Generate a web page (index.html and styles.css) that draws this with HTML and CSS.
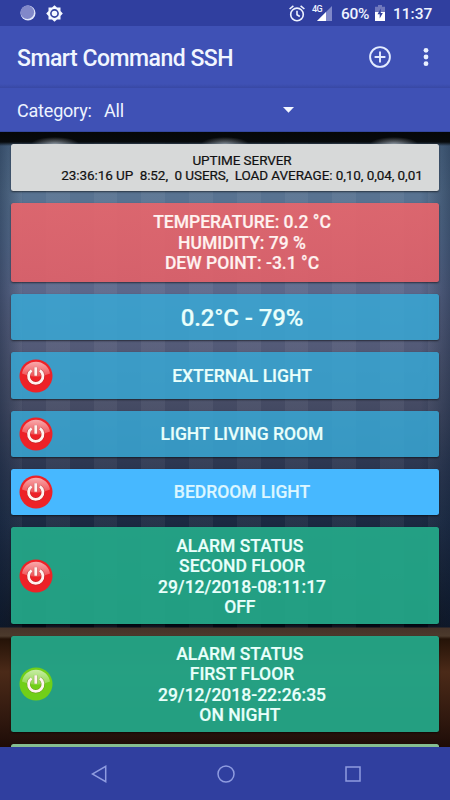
FILE: index.html
```html
<!DOCTYPE html>
<html lang="en">
<head>
    <meta charset="UTF-8">
    <meta name="viewport" content="width=device-width, initial-scale=1.0">
    <title>Smart Command SSH</title>
    <link rel="stylesheet" href="styles.css">
</head>
<body>
    <!-- shared power button drawing -->
    <svg class="defs" width="0" height="0">
        <defs>
            <linearGradient id="shine" x1="0" y1="0" x2="0" y2="1">
                <stop offset="0" stop-color="#fff" stop-opacity=".62"/>
                <stop offset="1" stop-color="#fff" stop-opacity=".2"/>
            </linearGradient>
            <symbol id="power" viewBox="0 0 34 34">
                <circle cx="17" cy="17" r="16.5" fill="currentColor"/>
                <path d="M3 14.500A14.200 14.200 0 0 1 31 14.500Q17 21 3 14.500z" fill="url(#shine)"/>
                <path d="M12.600 11.300a7.200 7.200 0 1 0 8.300 0M16.750 8.200v8.600" fill="none" stroke="#400" stroke-opacity=".25" stroke-width="3.800"/>
                <path d="M12.600 11.300a7.200 7.200 0 1 0 8.300 0M16.750 8.200v8.600" fill="none" stroke="#fff4f0" stroke-width="2.800"/>
            </symbol>
        </defs>
    </svg>

    <div class="screen">
        <div class="status-bar">
            <svg class="dot" width="16" height="16" viewBox="0 0 16 16">
                <circle cx="8" cy="8" r="7.500" fill="#e0e6fb"/>
                <circle cx="7.300" cy="7.300" r="6.800" fill="#8188c9"/>
            </svg>
            <svg class="gear" width="17" height="17" viewBox="0 0 17 17">
                <path d="M8.500 .2L11 2.500h3.500V6l2.300 2.500-2.300 2.500v3.500H11l-2.500 2.300L6 14.500H2.500V11L.2 8.500 2.500 6V2.500H6z" fill="#f4f8ff"/>
                <circle cx="8.500" cy="8.500" r="3.600" fill="#f4f8ff" stroke="#303f9f" stroke-width="1.600"/>
            </svg>
            <svg class="alarm" width="16" height="17" viewBox="0 0 16 17" fill="none" stroke="#eef3ff" stroke-width="1.600">
                <circle cx="8" cy="9.400" r="6.300"/>
                <path d="M8 5.800v4l2.800 1.700M.6 4L4.400.9M15.400 4L11.600.9"/>
            </svg>
            <span class="network">4G</span>
            <svg class="signal" width="15" height="15" viewBox="0 0 15 15">
                <path d="M0 15L15 0v15z" fill="#7f88c9"/>
                <path d="M0 15L9 6v9z" fill="#fff"/>
            </svg>
            <span class="percent">60%</span>
            <svg class="battery" width="10" height="16" viewBox="0 0 10 16">
                <path d="M3 0h4v1.800h3V16H0V1.800h3z" fill="#7179bd"/>
                <path d="M0 7h10v9H0z" fill="#fff"/>
                <path d="M5.800 3.500L2.500 9.300h2.200V13.500L7.800 8H5.800z" fill="#303f9f"/>
            </svg>
            <span class="clock">11:37</span>
        </div>

        <div class="toolbar">
            <h1>Smart Command SSH</h1>
            <svg class="add" width="22" height="22" viewBox="0 0 22 22" fill="none" stroke="#e3ecff" stroke-width="1.900">
                <circle cx="11" cy="11" r="9.900"/>
                <path d="M11 5.600v10.800M5.600 11h10.800"/>
            </svg>
            <svg class="more" width="6" height="20" viewBox="0 0 6 20" fill="#e9f0ff">
                <circle cx="3" cy="3.300" r="2.400"/>
                <circle cx="3" cy="10" r="2.400"/>
                <circle cx="3" cy="16.700" r="2.400"/>
            </svg>
        </div>

        <div class="category">
            <span class="label">Category:</span>
            <span class="value">All</span>
            <svg width="11" height="6" viewBox="0 0 11 6"><path d="M0 0h11L5.500 5.800z" fill="#f4f8ff"/></svg>
        </div>

        <div class="commands">
            <div class="card uptime"><p>UPTIME SERVER
23:36:16 UP  8:52,  0 USERS,  LOAD AVERAGE: 0,10, 0,04, 0,01</p></div>
            <div class="card red"><p>TEMPERATURE: 0.2 °C
HUMIDITY: 79 %
DEW POINT: -3.1 °C</p></div>
            <div class="card blue big"><p>0.2°C - 79%</p></div>
            <div class="card blue">
                <svg class="power off"><use href="#power"/></svg>
                <p>EXTERNAL LIGHT</p>
            </div>
            <div class="card blue">
                <svg class="power off"><use href="#power"/></svg>
                <p>LIGHT LIVING ROOM</p>
            </div>
            <div class="card bright">
                <svg class="power off"><use href="#power"/></svg>
                <p>BEDROOM LIGHT</p>
            </div>
            <div class="card green">
                <svg class="power off"><use href="#power"/></svg>
                <p>ALARM STATUS&nbsp;
SECOND FLOOR
29/12/2018-08:11:17
OFF&nbsp;</p>
            </div>
            <div class="card green">
                <svg class="power on"><use href="#power"/></svg>
                <p>ALARM STATUS&nbsp;
FIRST FLOOR
29/12/2018-22:26:35
ON NIGHT&nbsp;</p>
            </div>
            <div class="card pale"></div>
        </div>

        <div class="nav-bar">
            <svg width="16" height="18" viewBox="0 0 16 18"><path d="M14.700 1.300v15.400L1.300 9z"/></svg>
            <svg width="18" height="18" viewBox="0 0 18 18"><circle cx="9" cy="9" r="8"/></svg>
            <svg width="16" height="16" viewBox="0 0 16 16"><path d="M1 1h14v14H1z"/></svg>
        </div>
    </div>
</body>
</html>
```

FILE: styles.css
```css
* {
    box-sizing: border-box;
}
body {
    margin: 0;
    font-family: Roboto, sans-serif;
    color: #fff;
    background: #303f9f;
}
h1, p {
    margin: 0;
}
svg {
    display: block;
    flex-shrink: 0;
}
.defs {
    position: absolute;
}
.screen {
    width: 450px;
    height: 800px;
    display: flex;
    flex-direction: column;
    overflow: hidden;
}
.status-bar {
    height: 26px;
    flex-shrink: 0;
    display: flex;
    align-items: center;
    padding: 0 18px 0 20px;
    background: #303f9f;
    color: #eef3ff;
    font-size: 15.5px;
    font-weight: 500;
    white-space: nowrap;
}
.gear {
    margin-left: 10px;
}
.alarm {
    margin-left: auto;
}
.network {
    width: 10px;
    margin-left: 7px;
    align-self: flex-start;
    padding-top: 5px;
    font-size: 9px;
    line-height: 9px;
    letter-spacing: -0.5px;
}
.signal {
    margin: 1px 0 0 -5px;
}
.percent {
    width: 29px;
    margin-left: 9px;
    padding-top: 2px;
    letter-spacing: -0.3px;
}
.battery {
    margin-left: 5px;
}
.clock {
    width: 39px;
    margin-left: 8px;
    padding-top: 2px;
}
.toolbar {
    height: 62px;
    flex-shrink: 0;
    display: flex;
    align-items: center;
    padding: 0 21px 0 17px;
    background: linear-gradient(#3f51b5 58px, #3848a4);
}
.toolbar h1 {
    font-size: 23px;
    font-weight: 500;
    line-height: 28px;
    letter-spacing: -0.500px;
    padding-top: 3px;
    color: #f1f6ff;
    white-space: nowrap;
}
.add {
    margin-left: auto;
}
.more {
    margin-left: 32px;
}
.category {
    height: 44px;
    flex-shrink: 0;
    display: flex;
    align-items: center;
    padding: 1px 17px 0;
    background: #3f51b5;
    border-bottom: 1px solid #34479f;
    font-size: 18px;
    letter-spacing: -0.200px;
    color: #edf4ff;
}
.category .label {
    width: 87px;
}
.category .value {
    width: 179px;
}
.commands {
    flex: 1;
    min-height: 0;
    overflow: hidden;
    display: flex;
    flex-direction: column;
    gap: 12px;
    padding: 12.400px 11px 0;
    background:
        radial-gradient(ellipse 24px 7px at 55px 12px, rgba(190, 200, 210, .65), transparent),
        radial-gradient(ellipse 24px 7px at 225px 12px, rgba(190, 200, 210, .6), transparent),
        radial-gradient(ellipse 24px 7px at 394px 12px, rgba(190, 200, 210, .65), transparent),
        linear-gradient(#050708 0, #070a0c 10px, transparent 14px),
        linear-gradient(transparent 495px, #453329 496px, #4c3a2c 504px, #251308 507px, #4b2a18 540px, #2e170e 590px, #1d0b07 616px),
        linear-gradient(90deg, rgba(8, 25, 50, .42), transparent 24px, transparent 420px, rgba(8, 25, 50, .42)),
        repeating-linear-gradient(90deg, rgba(255, 255, 255, .05) 0 22px, transparent 22px 46px, rgba(255, 255, 255, .05) 46px 47.700px),
        linear-gradient(#4b6887 0, #587391 60px, #596f91 110px, #5c678a 160px, #535a77 215px, #454b64 272px, #2d3750 331px, #1b2942 390px, #050b18 494px);
}
.card {
    flex-shrink: 0;
    min-height: 46.300px;
    position: relative;
    display: flex;
    align-items: center;
    justify-content: center;
    padding: 1px 4px 0 38px;
    border-radius: 2.500px;
    box-shadow: 0 1px 2px rgba(0, 0, 0, .55);
    font-size: 17.500px;
    font-weight: 500;
    line-height: 20.500px;
    text-align: center;
    white-space: pre;
    color: #e9fffb;
    -webkit-text-stroke: 0.200px;
}
.uptime {
    background: #d7d9d9;
    color: #111;
    font-size: 13.500px;
    font-weight: 400;
    line-height: 15.500px;
    letter-spacing: -0.080px;
}
.red {
    height: 79.500px;
    background: linear-gradient(rgba(232, 101, 107, .91), rgba(225, 96, 104, .91));
    color: #fff2f0;
}
.blue {
    background: rgba(56, 166, 212, .86);
}
.big {
    font-size: 24px;
    letter-spacing: -0.100px;
}
.bright {
    background: #47b8ff;
    color: #dcf6ff;
}
.green {
    height: 96.300px;
    padding-top: 2px;
    background: rgba(36, 166, 136, .95);
}
.pale {
    background: #86bd91;
}
.power {
    position: absolute;
    left: 8px;
    top: 50%;
    width: 34px;
    height: 34px;
    margin-top: -17px;
}
.off {
    color: #ed2227;
}
.on {
    color: #71cf18;
}
.nav-bar {
    height: 53px;
    flex-shrink: 0;
    display: flex;
    align-items: center;
    justify-content: center;
    gap: 110px;
    padding-left: 2px;
    background: #303f9f;
    fill: none;
    stroke: #8f9ce0;
    stroke-width: 1.500;
}
```
